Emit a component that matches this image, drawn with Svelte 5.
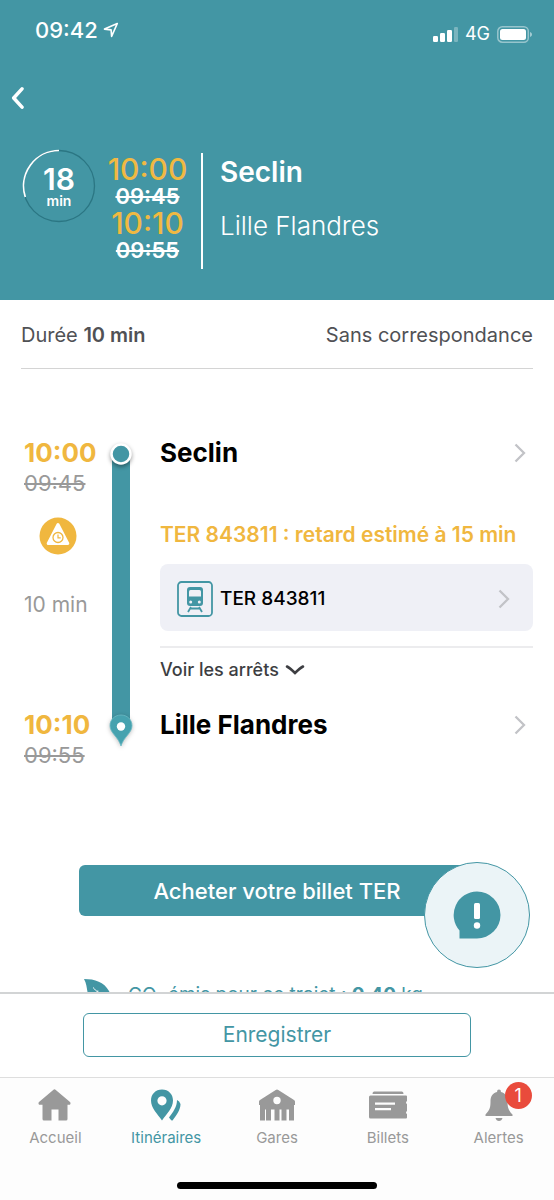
<script>
  const origin = { name: 'Seclin', time: '10:00', planned: '09:45' };
  const destination = { name: 'Lille Flandres', time: '10:10', planned: '09:55' };
  const train = 'TER 843811';
  const tabs = [
    { id: 'home', label: 'Accueil' },
    { id: 'routes', label: 'Itinéraires', active: true },
    { id: 'stations', label: 'Gares' },
    { id: 'tickets', label: 'Billets' },
    { id: 'alerts', label: 'Alertes', badge: 1 }
  ];
</script>

{#snippet chevron()}
  <svg class="chevron" width="14" height="22" viewBox="0 0 14 22" aria-hidden="true">
    <path d="M2.500 2.500 11 11l-8.500 8.500" fill="none" stroke="#c2c3c7" stroke-width="2.300" />
  </svg>
{/snippet}

<div class="app">
  <header>
    <div class="status">
      <div class="clock">
        <span>09:42</span>
        <svg width="16" height="16" viewBox="0 0 16 16" aria-hidden="true">
          <path d="M14.300 1.500 1.500 7.100l6.600.8.500 6.500z" fill="none" stroke="#fff" stroke-width="1.600" stroke-linejoin="round" />
        </svg>
      </div>
      <div class="signals">
        <svg width="26" height="16" viewBox="0 0 26 16" fill="#fff" aria-hidden="true">
          <rect x="1" y="10" width="5" height="6" rx="1.200" />
          <rect x="8" y="7" width="5" height="9" rx="1.200" />
          <rect x="15" y="4" width="5" height="12" rx="1.200" />
          <rect x="22" y="1" width="4" height="15" rx="1.200" opacity=".3" />
        </svg>
        <span>4G</span>
        <svg width="36" height="17" viewBox="0 0 36 17" aria-hidden="true">
          <rect x=".8" y=".8" width="30.500" height="15.400" rx="4.500" fill="none" stroke="#fff" stroke-opacity=".45" stroke-width="1.500" />
          <rect x="3" y="3" width="26" height="11" rx="2.500" fill="#fff" />
          <path d="M33 6v5c1.300-.4 2-1.300 2-2.500S34.300 6.400 33 6z" fill="#fff" opacity=".5" />
        </svg>
      </div>
    </div>

    <button class="back" aria-label="Retour">
      <svg width="14" height="24" viewBox="0 0 14 24" aria-hidden="true">
        <path d="M12 2.800 3.700 12l8.300 9.200" fill="none" stroke="#fff" stroke-width="3.500" stroke-linecap="round" stroke-linejoin="round" />
      </svg>
    </button>

    <div class="trip">
      <div class="countdown">
        <svg class="ring" viewBox="0 0 74 74" aria-hidden="true">
          <circle cx="37" cy="37" r="35.500" fill="none" stroke="#2b7683" stroke-width="1.300" />
          <path d="M37 1.500A35.500 35.500 0 0 0 3.300 48" fill="none" stroke="#fff" stroke-width="1.700" />
        </svg>
        <strong>18</strong>
        <span>min</span>
      </div>
      <div class="times">
        <span class="new">{origin.time}</span>
        <s>{origin.planned}</s>
        <span class="new">{destination.time}</span>
        <s>{destination.planned}</s>
      </div>
      <div class="places">
        <strong>{origin.name}</strong>
        <span>{destination.name}</span>
      </div>
    </div>
  </header>

  <div class="body">
    <main>
      <div class="summary">
        <span>Durée <b>10 min</b></span>
        <span>Sans correspondance</span>
      </div>

      <div class="timeline">
        <div class="stop-time">
          <strong>{origin.time}</strong>
          <s>{origin.planned}</s>
        </div>
        <a class="stop" href="#seclin">{origin.name}{@render chevron()}</a>

        <div class="rail">
          <svg class="dot" width="28" height="28" viewBox="0 0 28 28" aria-hidden="true">
            <circle cx="14" cy="14" r="9.500" fill="#4396a4" stroke="#fff" stroke-width="2.500" />
          </svg>
          <div class="line"></div>
          <svg class="pin" width="28" height="36" viewBox="0 0 28 36" aria-hidden="true">
            <path d="M14 2C7.700 2 3 6.600 3 12.700 3 20 11.500 24 14 33c2.500-9 11-13 11-20.300C25 6.600 20.300 2 14 2z" fill="#46a2af" stroke="#6cbac4" stroke-width=".8" />
            <circle cx="14" cy="13.500" r="4.200" fill="#fff" />
          </svg>
        </div>

        <div class="leg-time">
          <svg width="38" height="38" viewBox="0 0 38 38" role="img" aria-label="Retard">
            <circle cx="19" cy="19" r="18.500" fill="#f0b73f" />
            <path d="M19 7.500 28.800 26.500H9.200z" fill="#fff" stroke="#fff" stroke-width="3" stroke-linejoin="round" />
            <circle cx="19" cy="20.500" r="5" fill="none" stroke="#f0b73f" stroke-width="1.300" />
            <path d="M19 17.500v3.300h2.700" fill="none" stroke="#f0b73f" stroke-width="1.200" />
          </svg>
          <span>10 min</span>
        </div>
        <div class="leg">
          <p class="delay">{train} : retard estimé à 15 min</p>
          <a class="train" href="#train">
            <svg width="36" height="36" viewBox="0 0 36 36" aria-hidden="true">
              <rect x="1" y="1" width="34" height="34" rx="3.500" fill="none" stroke="#4396a4" stroke-width="1.800" />
              <path d="M13 6h10q3 0 3 3v13q0 3-3 3H13q-3 0-3-3V9q0-3 3-3z" fill="#4396a4" />
              <path d="M13.500 9h9q1.500 0 1.500 1.500v5H12v-5q0-1.500 1.500-1.500z" fill="#eff0f6" />
              <circle cx="13.700" cy="21" r="1.500" fill="#eff0f6" />
              <circle cx="22.300" cy="21" r="1.500" fill="#eff0f6" />
              <path d="M14 26l-3 5M22 26l3 5M13.500 27.500h9" fill="none" stroke="#4396a4" stroke-width="1.800" />
            </svg>
            <span>{train}</span>
            {@render chevron()}
          </a>
          <button class="stops">
            Voir les arrêts
            <svg width="20" height="12" viewBox="0 0 20 12" aria-hidden="true">
              <path d="M2 2.500c2 1 5.500 4 8 6.500 2.500-2.500 6-5.500 8-6.500" fill="none" stroke="#3d3e42" stroke-width="2.600" stroke-linecap="round" />
            </svg>
          </button>
        </div>

        <div class="stop-time">
          <strong>{destination.time}</strong>
          <s>{destination.planned}</s>
        </div>
        <a class="stop" href="#lille-flandres">{destination.name}{@render chevron()}</a>
      </div>

      <button class="buy">Acheter votre billet TER</button>

      <p class="co2">
        <svg width="30" height="30" viewBox="0 0 30 30" aria-hidden="true">
          <path d="M0 0c11 0 20 3 25 12 2.500 5 2 11 0 15-9 1-16-1-20-9C2.500 12.500 3.500 6 0 0z" fill="#4396a4" />
          <path d="M9 8.500c4 4 11 10.500 16 19.500M13.800 11.500v6" fill="none" stroke="#fff" stroke-width="1" />
        </svg>
        <span>CO<sub>2</sub> émis pour ce trajet : <b>0,40</b> kg</span>
      </p>
    </main>

    <button class="assist" aria-label="Signaler un problème">
      <svg width="48" height="48" viewBox="0 0 48 48" aria-hidden="true">
        <path d="M24 .5a23.500 23.500 0 0 1 0 47H6.500v-8A23.500 23.500 0 0 1 24 .5z" fill="#4396a4" />
        <rect x="21" y="12" width="6" height="16" rx="1.500" fill="#fff" />
        <circle cx="24" cy="34.500" r="3.200" fill="#fff" />
      </svg>
    </button>
  </div>

  <div class="save"><button>Enregistrer</button></div>

  <nav>
    {#each tabs as tab}
      <a href="#{tab.id}" class:active={tab.active}>
        <span class="icon">
          <svg width="40" height="34" viewBox="0 0 40 34" fill="currentColor" aria-hidden="true">
            {#if tab.id === 'home'}
              <path d="M18.200 1.900q1.300-1.200 2.600 0L35 14q1 1 .3 2.200-.4.500-1.300.5H32.500V31q0 1.500-1.500 1.500H23.500V21.500h-7v11H9Q7.500 32.500 7.500 31V16.700H5q-.9 0-1.300-.5Q3 15 4 14z" />
            {:else if tab.id === 'routes'}
              <path fill-rule="evenodd" d="M16 1.500C9.500 1.500 5 6.200 5 12.500 5 20 11.500 26 16 32.500 20.500 26 27 20 27 12.500 27 6.200 22.500 1.500 16 1.500zm0 6.700a4.600 4.600 0 1 1 0 9.200 4.600 4.600 0 0 1 0-9.200z" />
              <path d="M31 12q2.500 1 3.500 4c0 6-4 11-8 16.500q-.8 0-1.500-.6L23 29.500C27 24 31 19 31 12z" />
            {:else if tab.id === 'stations'}
              <path fill-rule="evenodd" d="M18.700 2q1.300-.9 2.600 0L37 12q1 .7 1 1.500V17h-1v15.500h-5V21.500h-2.500v11h-5v-11h-2v11h-5v-11H14v11H9v-11H8v11H3V17H2v-3.500q0-.8 1-1.500zM20 8.800a3.700 3.700 0 1 0 0 7.400 3.700 3.700 0 0 0 0-7.400z" />
            {:else if tab.id === 'tickets'}
              <path d="M6 3.500h28q1.500 0 1.500 2.500h-31Q4.500 3.500 6 3.500z" />
              <path fill-rule="evenodd" d="M2.500 7.500H38q1 0 1 1V13q-1 .5-1 1.500t1 1.500v7q-1 .5-1 1.500t1 1.500v3.500q0 1-1 1H2.500q-1.500 0-1.500-1.500V9q0-1.500 1.500-1.500zM7 14.500v2.200h20v-2.200zm0 5.500v2.200h16V20z" />
            {:else}
              <path d="M20 1.500q2 0 2 2.400c4.500 1.100 6.500 4.600 6.500 9.100 0 6 .5 9 5 13.500v1.500h-27v-1.500c4.500-4.500 5-7.500 5-13.500 0-4.500 2-8 6.500-9.100q0-2.400 2-2.400zM16.500 30h7q-.8 3-3.500 3t-3.500-3z" />
            {/if}
          </svg>
          {#if tab.badge}<span class="badge">{tab.badge}</span>{/if}
        </span>
        {tab.label}
      </a>
    {/each}
  </nav>
  <div class="home-bar"><span></span></div>
</div>

<style>
  :global(body) {
    margin: 0;
    background: #fff;
  }

  .app {
    --teal: #4396a4;
    --amber: #f0b73f;
    --grey: #999;
    height: 100vh;
    display: flex;
    flex-direction: column;
    font-family: Inter, 'Liberation Sans', sans-serif;
    font-size: 20px;
    line-height: 24px;
    color: #505155;
    background: #fff;
  }

  .app * {
    box-sizing: border-box;
  }

  button {
    font: inherit;
    border: 0;
    padding: 0;
    background: none;
    color: inherit;
    cursor: pointer;
  }

  a {
    color: inherit;
    text-decoration: none;
  }

  svg {
    display: block;
    flex: none;
  }

  p {
    margin: 0;
  }

  /* Header */
  header {
    background: var(--teal);
    color: #fff;
    padding: 14px 0 31px;
  }

  .status {
    display: flex;
    justify-content: space-between;
    padding: 0 21px 0 35px;
  }

  .clock,
  .signals {
    display: flex;
    align-items: center;
  }

  .clock {
    gap: 5px;
    font-size: 22px;
    font-weight: 500;
  }

  .signals {
    gap: 7px;
    font-size: 18px;
    padding-top: 8px;
  }

  .back {
    display: block;
    margin: 40px 0 0 10px;
  }

  .trip {
    display: flex;
    padding: 39px 21px 0 22px;
  }

  .countdown {
    position: relative;
    width: 74px;
    height: 74px;
    display: flex;
    flex-direction: column;
    align-items: center;
    padding-top: 17px;
  }

  .ring {
    position: absolute;
    inset: 0;
  }

  .countdown strong {
    font-size: 30px;
    font-weight: 600;
    line-height: 26px;
  }

  .countdown span {
    font-size: 14px;
    font-weight: 600;
    line-height: 18px;
  }

  .times {
    width: 105px;
    display: flex;
    flex-direction: column;
    align-items: center;
    padding: 7px 2px 0 0;
  }

  .times .new {
    font-size: 30px;
    font-weight: 500;
    line-height: 26px;
    color: #f0b942;
  }

  .times s {
    font-size: 22px;
    font-weight: 600;
    line-height: 28px;
  }

  .places {
    flex: 1;
    margin-top: 4px;
    border-left: 2px solid #fff;
    padding: 1px 0 25px 17px;
    display: flex;
    flex-direction: column;
    font-size: 28px;
    line-height: 36px;
    gap: 18px;
  }

  .places strong {
    font-weight: 600;
  }

  .places span {
    font-size: 26px;
    font-weight: 300;
  }

  /* Journey detail */
  .body {
    position: relative;
    flex: 1;
    min-height: 0;
  }

  main {
    height: 100%;
    overflow-y: auto;
    scrollbar-width: none;
  }

  .summary {
    display: flex;
    justify-content: space-between;
    margin: 0 21px;
    padding: 23px 0 21px;
    border-bottom: 1px solid #d4d4d4;
  }

  .summary b {
    font-weight: 600;
  }

  .timeline {
    display: grid;
    grid-template-columns: 83px 28px 1fr;
    grid-template-rows: 60px 212px 60px;
    padding: 69px 21px 0 24px;
  }

  .stop-time,
  .leg-time {
    grid-column: 1;
  }

  .stop-time {
    display: flex;
    flex-direction: column;
    line-height: 30px;
  }

  .stop-time strong {
    font-size: 26px;
    font-weight: 700;
    color: var(--amber);
  }

  .stop-time s {
    font-size: 22px;
    color: var(--grey);
  }

  .stop,
  .leg {
    grid-column: 3;
    margin-left: 25px;
  }

  .stop {
    display: flex;
    align-items: center;
    justify-content: space-between;
    height: 30px;
    padding-right: 6px;
    font-size: 26px;
    font-weight: 700;
    color: #000;
  }

  .rail {
    grid-column: 2;
    grid-row: 1 / 4;
    display: flex;
    flex-direction: column;
    align-items: center;
    padding: 2px 0 21px;
  }

  .dot,
  .pin {
    position: relative;
    filter: drop-shadow(0 2px 2px rgb(0 0 0 / 40%));
  }

  .pin {
    filter: drop-shadow(0 1px 2px rgb(0 0 0 / 25%));
  }

  .line {
    flex: 1;
    width: 18px;
    margin: -14px 0;
    background: var(--teal);
  }

  .leg-time {
    display: flex;
    flex-direction: column;
    gap: 38px;
    padding-top: 19px;
    font-size: 21px;
    color: var(--grey);
  }

  .leg-time svg {
    margin-left: 15px;
  }

  .leg {
    padding-top: 25px;
  }

  .delay {
    font-size: 21px;
    font-weight: 600;
    color: var(--amber);
    white-space: nowrap;
  }

  .train {
    display: flex;
    align-items: center;
    gap: 7px;
    height: 67px;
    margin-top: 17px;
    padding: 3px 22px 0 17px;
    border-radius: 8px;
    background: #eff0f6;
    color: #000;
    font-size: 19px;
    font-weight: 500;
  }

  .train span {
    flex: 1;
  }

  .stops {
    display: flex;
    align-items: center;
    gap: 6px;
    width: 100%;
    margin-top: 15px;
    padding-top: 10px;
    border-top: 2px solid #ececee;
    font-size: 18px;
    font-weight: 500;
    color: #3d3e42;
  }

  .buy {
    display: block;
    width: calc(100% - 158px);
    height: 51px;
    margin: 95px 79px 0;
    border-radius: 6px;
    background: var(--teal);
    color: #fff;
    font-size: 22px;
    font-weight: 500;
  }

  .co2 {
    display: flex;
    gap: 14px;
    margin: 63px 79px 0 84px;
    font-size: 19px;
    color: var(--teal);
  }

  .co2 span {
    padding-top: 4px;
  }

  .co2 sub {
    font-size: 10px;
    line-height: 0;
  }

  .assist {
    position: absolute;
    right: 24px;
    bottom: 24px;
    width: 106px;
    height: 106px;
    display: grid;
    place-items: center;
    border: 1px solid var(--teal);
    border-radius: 50%;
    background: #ebf4f7;
  }

  /* Bottom bars */
  .save {
    padding: 19px 83px 20px;
    border-top: 2px solid #d2d4d5;
    background: #fff;
  }

  .save button {
    display: block;
    width: 100%;
    height: 44px;
    border: 1px solid var(--teal);
    border-radius: 6px;
    font-size: 21px;
    color: var(--teal);
  }

  nav {
    display: grid;
    grid-template-columns: repeat(5, 1fr);
    border-top: 1px solid #dedede;
    background: #fdfdfd;
    padding-top: 10px;
    font-size: 15px;
    color: var(--grey);
  }

  nav a {
    display: flex;
    flex-direction: column;
    align-items: center;
    gap: 4px;
  }

  nav .active {
    color: var(--teal);
  }

  .icon {
    position: relative;
  }

  .badge {
    position: absolute;
    top: -6px;
    right: -13px;
    width: 27px;
    height: 27px;
    border-radius: 50%;
    background: #e94b3c;
    color: #fff;
    font-size: 18px;
    line-height: 27px;
    text-align: center;
  }

  .home-bar {
    display: flex;
    justify-content: center;
    padding: 32px 0 11px;
    background: #fdfdfd;
  }

  .home-bar span {
    width: 36%;
    height: 7px;
    border-radius: 4px;
    background: #000;
  }
</style>
